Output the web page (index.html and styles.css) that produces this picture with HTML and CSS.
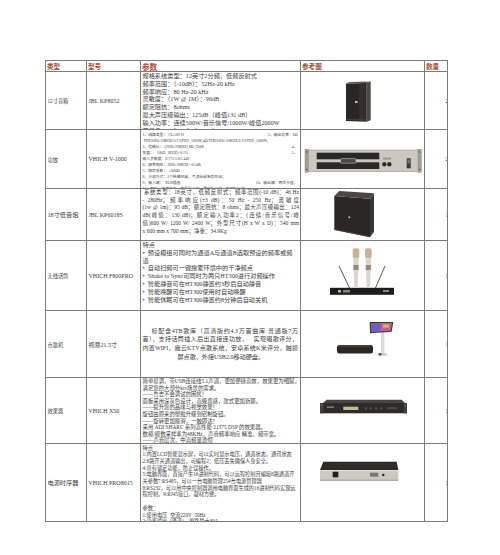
FILE: index.html
```html
<!DOCTYPE html>
<html lang="zh">
<head>
<meta charset="utf-8">
<title>设备清单</title>
<link rel="stylesheet" href="styles.css">
</head>
<body>
<div class="page">
  <div class="sheet">
    <div class="cell head">类型</div>
    <div class="cell head">型号</div>
    <div class="cell head big">参数</div>
    <div class="cell head">参考图</div>
    <div class="cell head">数量</div>

    <!-- row 1 -->
    <div class="cell label">12寸音箱</div>
    <div class="cell label model">JBL KP8052</div>
    <div class="cell params p1">
      <div>规格系统类型：12英寸2分频，低频反射式</div>
      <div>频率范围：（-10dB）：52Hz-20 kHz</div>
      <div>频率响应：80 Hz-20 kHz</div>
      <div>灵敏度：（1W @ 1M）：96dB</div>
      <div>额定阻抗：8ohms</div>
      <div>最大声压级输出：125dB（峰值131 dB）</div>
      <div>输入功率：连续500W/音乐信号/1000W/峰值2000W</div>
      <div>覆盖角：70° x60° （H x V）</div>
    </div>
    <div class="cell pic">
      <svg viewBox="0 0 123 57" width="123" height="57">
        <polygon points="45,11.5 65.7,11 65.7,49.7 45,49" fill="#2a2623"/>
        <polygon points="65.7,11 69.7,9.5 69.7,48.3 65.7,49.7" fill="#4d4844"/>
        <polygon points="45,11.5 48.5,10 69.7,9.5 65.7,11" fill="#5d5853"/>
        <rect x="58" y="12" width="6" height="37" fill="#34302c"/>
        <rect x="54" y="29" width="2.5" height="2" fill="#c9c4bb"/>
        <line x1="46" y1="47.5" x2="65" y2="48" stroke="#5a5550" stroke-width="0.6"/>
      </svg>
    </div>
    <div class="cell qty"><span>2</span></div>

    <!-- row 2 -->
    <div class="cell label">功放</div>
    <div class="cell label model">VHICH V-1000</div>
    <div class="cell params p2">
      <div class="ln"><span>1、线路类型：&nbsp;CLASS H</span><span class="r">2、输出功率：8Ω</span></div>
      <div class="ln">&nbsp;THD20Hz-20KHZ/0.1%THD ,1000W,4Ω:THD20Hz-20KHZ/0.1%THD ,1000W,</div>
      <div class="ln"><span>3、信噪比：&nbsp;(20Hz-20KHZ) 8Ω ,95dB ,</span><span class="r">4、</span></div>
      <div class="ln"><span>失真：&nbsp;&nbsp;&nbsp;100Ω&nbsp;&nbsp;1KHZ)&lt;0.1%</span><span class="r">5、</span></div>
      <div class="ln">输入灵敏度：0.775/1.0/1.44V</div>
      <div class="ln">6、频率响应：20Hz-20KHZ/-/0.5dB</div>
      <div class="ln">7、阻尼系数：&nbsp;&nbsp;≥600Ω</div>
      <div class="ln">8、冷却方式：2个转速风扇，气流从前至后吹出；</div>
      <div class="ln"><span>9、输入端：&nbsp;&nbsp;XLR插座</span><span class="r">10、输出端：两芯卡座、</span></div>
      <div class="ln">11、面板：电源开关，信号指示灯，保护指示灯，削波指示灯</div>
    </div>
    <div class="cell pic">
      <svg viewBox="0 0 123 58" width="123" height="58">
        <rect x="4" y="19.3" width="3.6" height="23" fill="#a29e95" stroke="#7d7a73" stroke-width="0.4"/>
        <rect x="116.8" y="19.3" width="3.6" height="23" fill="#a29e95" stroke="#7d7a73" stroke-width="0.4"/>
        <circle cx="5.8" cy="22" r="0.8" fill="#555"/>
        <circle cx="5.8" cy="39.5" r="0.8" fill="#555"/>
        <circle cx="118.6" cy="22" r="0.8" fill="#555"/>
        <circle cx="118.6" cy="39.5" r="0.8" fill="#555"/>
        <rect x="7.3" y="20" width="109.7" height="21.7" fill="#cbc8c0" stroke="#8d8a82" stroke-width="0.5"/>
        <rect x="15.7" y="22.7" width="62.6" height="6.6" fill="#2b2927"/>
        <rect x="15.7" y="32.3" width="62.6" height="6.7" fill="#2b2927"/>
        <rect x="39.5" y="28.6" width="15.5" height="4.6" rx="1" fill="#4a4744" stroke="#e0ddd6" stroke-width="0.5"/>
        <rect x="82" y="27.5" width="8" height="2" fill="#9c9890"/>
        <circle cx="83.3" cy="34.3" r="2.2" fill="#2f2d2b"/>
        <circle cx="88.3" cy="34.3" r="2.2" fill="#2f2d2b"/>
        <rect x="105.7" y="28.3" width="4" height="10" fill="#3a3836"/>
        <rect x="106.5" y="29.5" width="2.4" height="4" fill="#777"/>
      </svg>
    </div>
    <div class="cell qty"><span>2</span></div>

    <!-- row 3 -->
    <div class="cell label wide">18寸低音炮</div>
    <div class="cell label model">JBL KP6018S</div>
    <div class="cell params p3">
      <div class="j first">系统类型：18英寸，低频反射式；频率范围(-10 dB)：46 Hz</div>
      <div class="j">- 280Hz；频率响应(±3 dB)：50 Hz - 250 Hz；灵敏度</div>
      <div class="j">(1w @ 1m)：95 dB；额定阻抗：8 ohms；最大声压级输出：124</div>
      <div class="j">dB(峰值：130 dB)；额定输入功率2：(连续/音乐信号/峰</div>
      <div class="j">值)600 W/ 1200 W/ 2400 W；外型尺寸(H x W x D)：540 mm</div>
      <div>x 600 mm x 700 mm；净重：34.9Kg</div>
    </div>
    <div class="cell pic">
      <svg viewBox="0 0 123 51" width="123" height="51">
        <polygon points="33.3,7 69,9.7 69,48.3 33.3,41" fill="#2b2725"/>
        <polygon points="33.3,7 38.3,2 73,4.3 69,9.7" fill="#4b4642"/>
        <polygon points="69,9.7 73,4.3 73,42.7 69,48.3" fill="#3b3734"/>
        <line x1="34" y1="40.5" x2="68.5" y2="47.6" stroke="#55504b" stroke-width="0.6"/>
        <circle cx="48.3" cy="28.3" r="1" fill="#c8c2b8"/>
      </svg>
    </div>
    <div class="cell qty"><span>1</span></div>

    <!-- row 4 -->
    <div class="cell label">无线话筒</div>
    <div class="cell label model">VHICH F800PRO</div>
    <div class="cell params p4">
      <div>特点</div>
      <div>• &nbsp;预设模组可同时为通道A与通道B选取预设的频率或频</div>
      <div>道</div>
      <div>• &nbsp;自动扫频可一键搜索环境中的干净频点</div>
      <div>• &nbsp;Shake to Sync可同时为两只HT300进行对频操作</div>
      <div>• &nbsp;智能静音可在HT300静置约3秒后自动静音</div>
      <div>• &nbsp;智能唤醒可在HT300使用时自动唤醒</div>
      <div>• &nbsp;智能休眠可在HT300静置约8分钟后自动关机</div>
    </div>
    <div class="cell pic">
      <svg viewBox="0 0 123 69" width="123" height="69">
        <line x1="38" y1="25" x2="49" y2="48" stroke="#2d2b29" stroke-width="0.8"/>
        <line x1="84" y1="25" x2="74" y2="48" stroke="#2d2b29" stroke-width="0.8"/>
        <rect x="29" y="46.8" width="64" height="7" fill="#1f1d1c"/>
        <rect x="37" y="49" width="3" height="2.5" fill="#bdb7aa"/>
        <rect x="42" y="49" width="7" height="2.5" fill="#8b857a"/>
        <rect x="82" y="49" width="6" height="2" fill="#8b857a"/>
        <rect x="51.7" y="7.3" width="6.6" height="10" rx="2" fill="#c7b497"/>
        <polygon points="52.2,17.3 57.8,17.3 56.6,46.8 53.4,46.8" fill="#d9d5cd"/>
        <rect x="52.4" y="24" width="5.2" height="5" fill="#8f8a82"/>
        <rect x="64" y="7.3" width="6.6" height="10" rx="2" fill="#c7b497"/>
        <polygon points="64.5,17.3 70.1,17.3 68.9,46.8 65.7,46.8" fill="#d9d5cd"/>
        <rect x="64.7" y="24" width="5.2" height="5" fill="#8f8a82"/>
      </svg>
    </div>
    <div class="cell qty"><span>1</span></div>

    <!-- row 5 -->
    <div class="cell label">点歌机</div>
    <div class="cell label model">视易21.5寸</div>
    <div class="cell params p5">
      <div class="j indent">标配含4TB歌库（高清版约4.3万首曲库 普通版7万</div>
      <div class="j">首），支持话筒插入后出直接连功放，&nbsp;&nbsp;&nbsp;实现唱歌评分，</div>
      <div class="j">内置WIFI，魔云KTV点歌系统，安卓系统K米评分，触摸</div>
      <div class="last">屏点歌，外接USB2.0移动硬盘。</div>
    </div>
    <div class="cell pic">
      <svg viewBox="0 0 123 66" width="123" height="66">
        <rect x="36" y="34" width="36" height="8.5" rx="2.5" fill="#2a2725"/>
        <rect x="38" y="34.6" width="32" height="1" fill="#5a5652"/>
        <rect x="80.8" y="21" width="2.2" height="21.5" fill="#e2e0dc" stroke="#b3b0aa" stroke-width="0.4"/>
        <ellipse cx="82" cy="43.5" rx="4.5" ry="1.2" fill="#c9c6c0"/>
        <rect x="77.5" y="42" width="3" height="2.5" fill="#555"/>
        <polygon points="68.7,11 92.3,11 90.7,20.7 69,22.3" fill="#3b3a3c"/>
        <polygon points="70,12 91,12 89.7,19.8 70.2,21" fill="#c65a9a"/>
        <polygon points="70,12 80,12 79,20.4 70.2,21" fill="#6a5fc4"/>
        <rect x="82" y="13.5" width="6" height="3" fill="#f0b04a"/>
      </svg>
    </div>
    <div class="cell qty"><span>1</span></div>

    <!-- row 6 -->
    <div class="cell label">效果器</div>
    <div class="cell label model">VHICH X50</div>
    <div class="cell params p6">
      <div>简单易调，带USB连接线5.1声道，更加便捷高效，效果更为细腻，</div>
      <div>满足您的大部分ktv场景的需求。</div>
      <div>——告去不会调试的困扰！</div>
      <div>面板采用深灰色设计，高级质感，款式更加新颖。</div>
      <div>——提升您的品味与视觉效果！</div>
      <div>旋钮由原来的塑胶升级到铝制旋钮。</div>
      <div>——旋转更加顺滑，一触即达！</div>
      <div>采用 ADI SHARC 系列高性能 21375 DSP 的效果器。</div>
      <div>数模/模数采样率为48KHz，声音频率响应 精准，频带宽。</div>
      <div>——声音层次，中高频量透彻</div>
    </div>
    <div class="cell pic">
      <svg viewBox="0 0 123 65" width="123" height="65">
        <polygon points="25.7,21.8 100.7,21.8 104,25 22,25" fill="#4a4541"/>
        <rect x="19" y="25" width="87" height="10.3" fill="#2f2b28"/>
        <rect x="19" y="25" width="3.2" height="10.3" fill="#44403c"/>
        <rect x="102.8" y="25" width="3.2" height="10.3" fill="#44403c"/>
        <circle cx="20.6" cy="27" r="0.6" fill="#999"/>
        <circle cx="104.4" cy="27" r="0.6" fill="#999"/>
        <rect x="26" y="28.5" width="7" height="1.4" fill="#8a847c"/>
        <rect x="42.3" y="28.7" width="15" height="3.3" fill="#b5c394"/>
        <circle cx="65" cy="30.4" r="1.1" fill="#5a5550"/>
        <circle cx="70" cy="30.4" r="1.1" fill="#5a5550"/>
        <circle cx="75" cy="30.4" r="1.1" fill="#5a5550"/>
        <circle cx="80" cy="30.4" r="1.1" fill="#5a5550"/>
        <rect x="86" y="29.2" width="10" height="2" fill="#4e4a46"/>
      </svg>
    </div>
    <div class="cell qty"><span>1</span></div>

    <!-- row 7 -->
    <div class="cell label wide">电源时序器</div>
    <div class="cell label model">VHICH PRO8015</div>
    <div class="cell params p7">
      <div>特点</div>
      <div>1:内置LCD智能显示屏，可以实时显示电压，通道状态，通讯状态</div>
      <div>2:8路开关通道输出，可编程2：低压丢失确保人身安全。</div>
      <div>4:具有锁定功能，防止误操作。</div>
      <div>5:电脑界面，直接产生16进制代码，可以远程控制且编辑8路通道开</div>
      <div>关参数7:RS485，可以一台电脑管理254台电源管理器</div>
      <div>8:RS232，可以用中央控制器调用电脑界面生成的16进制代码实现远</div>
      <div>程控制，9:RJ45接口，凝材方便。</div>
      <div>&nbsp;</div>
      <div>参数：</div>
      <div>1:使用电压&nbsp;&nbsp;交流220V&nbsp;&nbsp;50Hz</div>
      <div>2:功率输出&nbsp;&nbsp;(通道)&nbsp;&nbsp;&nbsp;&nbsp;单路最大30A</div>
    </div>
    <div class="cell pic">
      <svg viewBox="0 0 123 77" width="123" height="77">
        <polygon points="22.3,17.7 95.7,17.7 97.3,26 19,26" fill="#2b2826"/>
        <line x1="24" y1="20" x2="95" y2="20" stroke="#45413d" stroke-width="0.5"/>
        <line x1="22" y1="23" x2="96" y2="23" stroke="#45413d" stroke-width="0.5"/>
        <rect x="19" y="26" width="78.3" height="10.7" fill="#cbc9c0"/>
        <rect x="19" y="26" width="78.3" height="1" fill="#e2e0d9"/>
        <rect x="19" y="35.7" width="78.3" height="1" fill="#9f9c94"/>
        <rect x="31.7" y="27.7" width="5.6" height="5.6" fill="#1f1d1c"/>
        <rect x="69" y="28.7" width="8.3" height="4" fill="#7a7872"/>
        <circle cx="82.3" cy="31" r="1.2" fill="#222"/>
      </svg>
    </div>
    <div class="cell qty"><span>1</span></div>
  </div>
</div>
</body>
</html>
```

FILE: styles.css
```css
* {
  box-sizing: border-box;
}

html,
body {
  margin: 0;
  padding: 0;
  background: #ffffff;
}

body {
  font-family: "Liberation Serif", "Noto Sans CJK SC", serif;
  color: #3a3a3a;
}

.page {
  padding: 60px 0 0 45px;
}

.sheet {
  display: grid;
  grid-template-columns: 40px 53px 159px 123px 22px;
  grid-template-rows: 10px 57px 58px 51px 69px 66px 65px 77px;
  gap: 1px;
  padding: 1px;
  width: 403px;
  background: #7b7b7b;
}

.cell {
  background: #ffffff;
  overflow: hidden;
}

.head {
  font-family: "Noto Sans CJK SC", sans-serif;
  font-weight: bold;
  font-size: 6.6px;
  line-height: 11px;
  color: #b4482c;
  padding-left: 1px;
}

.head.big {
  font-size: 7.6px;
}

.label {
  display: flex;
  align-items: center;
  padding-left: 1.5px;
  font-size: 5.2px;
  white-space: nowrap;
}

.label.wide {
  font-size: 6.2px;
}

.label.model {
  font-size: 6px;
}

.params {
  padding: 0 0 0 1.5px;
  white-space: nowrap;
}

.p1 {
  font-size: 6.2px;
  line-height: 7.8px;
}

.p2 {
  font-size: 3.8px;
  line-height: 6px;
  padding-top: 1.5px;
}

.p2 .ln {
  display: flex;
  width: 155px;
}

.p2 .r {
  margin-left: auto;
}

.p3 {
  font-size: 5.5px;
  line-height: 7.7px;
  padding-right: 1px;
}

.j {
  text-align: justify;
  text-align-last: justify;
  white-space: nowrap;
}

.p3 .first {
  padding-left: 1.5px;
}

.p4 {
  font-size: 6.2px;
  line-height: 7.8px;
}

.p5 {
  display: flex;
  flex-direction: column;
  justify-content: center;
  font-size: 6.1px;
  line-height: 8.7px;
  padding-right: 2px;
}

.p5 .indent {
  padding-left: 9px;
}

.p5 .last {
  padding-left: 35px;
}

.p6 {
  font-size: 5.4px;
  line-height: 6.6px;
}

.p7 {
  font-size: 5.2px;
  line-height: 6.7px;
  padding-top: 0.5px;
}

.pic {
  display: block;
}

.pic svg {
  display: block;
}

.qty {
  display: flex;
  align-items: center;
  justify-content: flex-end;
  font-size: 6px;
}

.qty span {
  margin-right: -1.5px;
}
```
